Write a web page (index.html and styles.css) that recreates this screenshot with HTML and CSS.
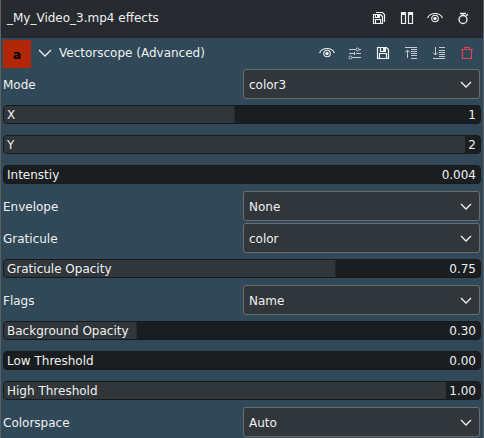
FILE: index.html
```html
<!DOCTYPE html>
<html lang="en">
<head>
<meta charset="utf-8">
<meta name="viewport" content="width=device-width, initial-scale=1">
<title>_My_Video_3.mp4 effects</title>
<link rel="stylesheet" href="styles.css">
</head>
<body>
<svg class="sprite" aria-hidden="true">
  <symbol id="eye" viewBox="0 0 16 16"><path d="M.5 8Q2.500 3.500 8 3.500T15.500 8" stroke-width="1.200"/><circle cx="8" cy="8.500" r="3.300" stroke-width="1.100"/><circle cx="8" cy="8.500" r="1.700" fill="currentColor" stroke="none"/></symbol>
  <symbol id="chevron" viewBox="0 0 16 16"><path d="M3 6l5 5 5-5" stroke-width="1.300"/></symbol>
  <symbol id="save" viewBox="0 0 16 16"><path d="M2.500 2.500h9l2 2v9h-11z M4.500 13.500v-5h7v5 M5.500 2.500v4h5v-4" stroke-width="1.200"/><path d="M8 3h2v3H8z" fill="currentColor" stroke="none"/></symbol>
</svg>
<main class="panel">
  <header class="titlebar">
    <h1 class="title">_My_Video_3.mp4 effects</h1>
    <div class="tools">
      <button class="tool" type="button" aria-label="Save effect stack"><svg viewBox="0 0 16 16"><path d="M5 2.500h6.500l2 2V12 M2.500 4.500h7l2 2v7h-9z M4.500 13.500v-4h5v4 M4.500 4.500v3h4v-3" stroke-width="1.200"/><path d="M6 5h2v2H6z" fill="currentColor" stroke="none"/></svg></button>
      <button class="tool" type="button" aria-label="Split compare"><svg viewBox="0 0 16 16"><path d="M2.500 2.500h4v11h-4z M9.500 2.500h4v11h-4z" stroke-width="1.200"/><path d="M2 2h5v3H2z M9 2h5v3H9z" fill="currentColor" stroke="none"/></svg></button>
      <button class="tool" type="button" aria-label="Toggle effects"><svg><use href="#eye"/></svg></button>
      <button class="tool" type="button" aria-label="Timer"><svg viewBox="0 0 16 16"><circle cx="8" cy="9.500" r="4" stroke-width="1.300"/><path d="M5 3.500h6 M8 3.500v2 M11 6l2-2" stroke-width="1.300"/></svg></button>
    </div>
  </header>
  <section class="effect">
    <div class="effect-head">
      <span class="badge">a</span>
      <button class="tool" type="button" aria-label="Collapse effect"><svg viewBox="0 0 16 16"><path d="M2 5l6 6 6-6" stroke-width="1.300"/></svg></button>
      <h2 class="title">Vectorscope (Advanced)</h2>
      <div class="tools">
        <button class="tool" type="button" aria-label="Enable effect"><svg><use href="#eye"/></svg></button>
        <button class="tool soft" type="button" aria-label="Presets"><svg viewBox="0 0 16 16"><path d="M2 4.500h7 M12 4.500h2 M2 8.500h5 M9 8.500h5 M5 12.500h9 M7.500 7v3"/><circle cx="10.500" cy="4.500" r="1.500"/><circle cx="3.500" cy="12.500" r="1.500"/></svg></button>
        <button class="tool" type="button" aria-label="Save effect"><svg><use href="#save"/></svg></button>
        <button class="tool soft" type="button" aria-label="Move effect up"><svg viewBox="0 0 16 16"><path d="M2 2.500h12 M8 4.500h6 M8 6.500h6 M8 8.500h6 M8 10.500h6 M8 13.500h6 M4.500 13V5 M2 7.500L4.500 5 7 7.500"/></svg></button>
        <button class="tool soft" type="button" aria-label="Move effect down"><svg viewBox="0 0 16 16"><path d="M8 2.500h6 M8 5.500h6 M8 7.500h6 M8 9.500h6 M8 11.500h6 M2 13.500h12 M4.500 2v8 M2 7.500L4.500 10 7 7.500"/></svg></button>
        <button class="tool danger" type="button" aria-label="Delete effect"><svg viewBox="0 0 16 16"><path d="M2 4.500h12 M5.500 4V2.500h5V4 M3.500 5v8.500h9V5" stroke-width="1.200"/></svg></button>
      </div>
    </div>
    <form class="params">
      <div class="choice"><label for="mode">Mode</label><span class="combo"><select id="mode"><option>color3</option></select><svg><use href="#chevron"/></svg></span></div>
      <div class="slider"><label for="x">X</label><input id="x" type="range" min="0" max="2" value="1" style="--fill:50%"><output for="x">1</output></div>
      <div class="slider"><label for="y">Y</label><input id="y" type="range" min="0" max="2" value="2" style="--fill:100%"><output for="y">2</output></div>
      <div class="slider"><label for="intensity">Intenstiy</label><input id="intensity" type="range" min="0" max="1" step="0.001" value="0.004" style="--fill:0%"><output for="intensity">0.004</output></div>
      <div class="choice"><label for="envelope">Envelope</label><span class="combo"><select id="envelope"><option>None</option></select><svg><use href="#chevron"/></svg></span></div>
      <div class="choice"><label for="graticule">Graticule</label><span class="combo"><select id="graticule"><option>color</option></select><svg><use href="#chevron"/></svg></span></div>
      <div class="slider"><label for="gopacity">Graticule Opacity</label><input id="gopacity" type="range" min="0" max="1" step="0.01" value="0.75" style="--fill:75%"><output for="gopacity">0.75</output></div>
      <div class="choice"><label for="flags">Flags</label><span class="combo"><select id="flags"><option>Name</option></select><svg><use href="#chevron"/></svg></span></div>
      <div class="slider"><label for="bopacity">Background Opacity</label><input id="bopacity" type="range" min="0" max="1" step="0.01" value="0.3" style="--fill:30%"><output for="bopacity">0.30</output></div>
      <div class="slider"><label for="low">Low Threshold</label><input id="low" type="range" min="0" max="1" step="0.01" value="0" style="--fill:0%"><output for="low">0.00</output></div>
      <div class="slider"><label for="high">High Threshold</label><input id="high" type="range" min="0" max="1" step="0.01" value="1" style="--fill:100%"><output for="high">1.00</output></div>
      <div class="choice"><label for="colorspace">Colorspace</label><span class="combo"><select id="colorspace"><option>Auto</option></select><svg><use href="#chevron"/></svg></span></div>
    </form>
  </section>
</main>
</body>
</html>
```
FILE: styles.css
```css
* { box-sizing: border-box; }

:root {
  --window: #272a2f;
  --effect: #304857;
  --field: #31363a;
  --groove: #1b1e20;
  --line: #6a6e72;
  --text: #eff0f1;
}

body {
  margin: 0;
  background: var(--window);
  color: var(--text);
  font: 12px/16px "DejaVu Sans", sans-serif;
}

.sprite { display: none; }

svg {
  width: 16px;
  height: 16px;
  fill: none;
  stroke: currentColor;
}

.panel {
  display: flex;
  flex-direction: column;
  min-height: 100vh;
  border: solid #5b5f61;
  border-width: 0 1px;
}

.titlebar {
  display: flex;
  align-items: center;
  height: 38px;
  padding: 0 6px 2px;
}

.title {
  flex: 1;
  margin: 0;
  font-size: 12px;
  font-weight: normal;
  line-height: 26px;
}

.tools { display: flex; }

.tool {
  display: grid;
  place-items: center;
  width: 28px;
  height: 26px;
  padding: 0;
  border: 0;
  background: none;
  color: var(--text);
}

.tool.soft { color: #c5cbd0; }
.tool.danger { color: #da4453; }

.effect {
  flex: 1;
  padding: 2px 2px 0;
  background: var(--effect);
}

.effect-head {
  display: flex;
  align-items: flex-start;
  margin-bottom: 1px;
}

.badge {
  width: 28px;
  padding: 7px 0 5px;
  background: #b02607;
  color: #000;
  font-weight: bold;
  text-align: center;
}

.params {
  display: grid;
  gap: 2px;
}

.choice {
  display: grid;
  grid-template-columns: 1fr 1fr;
  gap: 3px;
  align-items: center;
  padding-right: 1px;
}

.choice label { padding-top: 2px; }

.combo {
  display: grid;
  grid-template-columns: 1fr 22px;
  align-items: center;
}

.combo select {
  grid-area: 1 / 1 / 2 / 3;
  width: 100%;
  height: 30px;
  padding: 2px 5px 0;
  border: 1px solid var(--line);
  border-radius: 3px;
  appearance: none;
  background: var(--field);
  color: inherit;
  font: inherit;
}

.combo svg {
  grid-area: 1 / 2;
  pointer-events: none;
}

.slider {
  display: grid;
  grid-template-columns: 1fr auto;
  align-items: center;
  height: 19px;
  margin: 4px 0 5px;
  border: 1px solid #171a1c;
  border-radius: 4px;
  overflow: hidden;
  background: var(--groove);
}

.slider label {
  z-index: 1;
  grid-area: 1 / 1;
  justify-self: start;
  padding-left: 3px;
  pointer-events: none;
}

.slider input {
  grid-area: 1 / 1;
  width: 100%;
  height: 17px;
  margin: 0;
  appearance: none;
  background: linear-gradient(var(--field), var(--field)) no-repeat 0 0 / var(--fill) 100%;
}

.slider input::-webkit-slider-thumb {
  width: 1px;
  height: 17px;
  appearance: none;
  background: none;
}

.slider output { padding: 0 4px 0 3px; }
```
